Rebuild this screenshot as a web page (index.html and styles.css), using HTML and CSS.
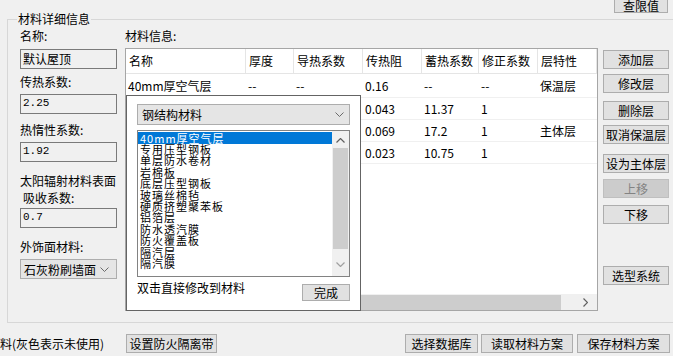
FILE: index.html
```html
<!DOCTYPE html>
<html lang="zh-CN">
<head>
<meta charset="utf-8">
<title>材料详细信息</title>
<link rel="stylesheet" href="styles.css">
</head>
<body>
<div class="top"><button class="btn btn-top">查限值</button></div>
<div class="group">
  <span class="group-title">材料详细信息</span>
  <div class="left">
    <div class="lbl">名称:</div>
    <div class="tb tb-cjk mt5">默认屋顶</div>
    <div class="lbl mt5">传热系数:</div>
    <div class="tb mt4">2.25</div>
    <div class="lbl mt8">热惰性系数:</div>
    <div class="tb mt4">1.92</div>
    <div class="lbl lbl-2 mt10">太阳辐射材料表面<br><span class="indent">吸收系数:</span></div>
    <div class="tb mt2">0.7</div>
    <div class="lbl mt11">外饰面材料:</div>
    <div class="combo combo-left mt4"><span>石灰粉刷墙面</span><svg class="chev" width="9" height="5" viewBox="0 0 9 5"><polyline points="0.5,0.5 4.5,4.5 8.5,0.5" fill="none" stroke="#6a6a6a" stroke-width="1"/></svg></div>
  </div>
  <div class="mid">
    <div class="lbl">材料信息:</div>
    <div class="lv mt4">
      <div class="lv-head">
        <div class="c c1">名称</div><div class="c c2">厚度</div><div class="c c3">导热系数</div><div class="c c4">传热阻</div><div class="c c5">蓄热系数</div><div class="c c6">修正系数</div><div class="c c7">层特性</div>
      </div>
      <div class="lv-row first">
        <div class="c c1">40mm厚空气层</div><div class="c c2">--</div><div class="c c3">--</div><div class="c c4">0.16</div><div class="c c5">--</div><div class="c c6">--</div><div class="c c7">保温层</div>
      </div>
      <div class="lv-row">
        <div class="c c1"></div><div class="c c2"></div><div class="c c3"></div><div class="c c4">0.043</div><div class="c c5">11.37</div><div class="c c6">1</div><div class="c c7"></div>
      </div>
      <div class="lv-row">
        <div class="c c1"></div><div class="c c2"></div><div class="c c3"></div><div class="c c4">0.069</div><div class="c c5">17.2</div><div class="c c6">1</div><div class="c c7">主体层</div>
      </div>
      <div class="lv-row">
        <div class="c c1"></div><div class="c c2"></div><div class="c c3"></div><div class="c c4">0.023</div><div class="c c5">10.75</div><div class="c c6">1</div><div class="c c7"></div>
      </div>
      <div class="hscroll">
        <div class="hthumb"></div>
        <svg class="harrow" width="5" height="9" viewBox="0 0 5 9"><polyline points="0.5,0.5 4.5,4.5 0.5,8.5" fill="none" stroke="#606060" stroke-width="1.2"/></svg>
      </div>
      <div class="popup">
        <div class="combo combo-pop"><span>钢结构材料</span><svg class="chev" width="9" height="5" viewBox="0 0 9 5"><polyline points="0.5,0.5 4.5,4.5 8.5,0.5" fill="none" stroke="#6a6a6a" stroke-width="1"/></svg></div>
        <div class="listbox">
          <div class="items">
            <div class="item sel">40mm厚空气层</div>
            <div class="item">专用压型钢板</div>
            <div class="item">单层防水卷材</div>
            <div class="item">岩棉板</div>
            <div class="item">底层压型钢板</div>
            <div class="item">玻璃丝棉毡</div>
            <div class="item">硬质挤塑聚苯板</div>
            <div class="item">铝箔层</div>
            <div class="item">防水透汽膜</div>
            <div class="item">防火覆盖板</div>
            <div class="item">隔汽层</div>
            <div class="item">隔汽膜</div>
          </div>
          <div class="vscroll">
            <svg class="varrow" width="9" height="5" viewBox="0 0 9 5"><polyline points="0.5,4.5 4.5,0.5 8.5,4.5" fill="none" stroke="#606060" stroke-width="1.2"/></svg>
            <div class="vthumb"></div>
            <svg class="varrow down" width="9" height="5" viewBox="0 0 9 5"><polyline points="0.5,0.5 4.5,4.5 8.5,0.5" fill="none" stroke="#a0a0a0" stroke-width="1.2"/></svg>
          </div>
        </div>
        <div class="pop-foot">
          <span class="hint">双击直接修改到材料</span>
          <button class="btn btn-done">完成</button>
        </div>
      </div>
    </div>
  </div>
  <div class="right">
    <button class="btn rb">添加层</button>
    <button class="btn rb mt5">修改层</button>
    <button class="btn rb mt8">删除层</button>
    <button class="btn rb mt5">取消保温层</button>
    <button class="btn rb mt10">设为主体层</button>
    <button class="btn rb disabled mt6">上移</button>
    <button class="btn rb mt7">下移</button>
    <button class="btn rb mt42">选型系统</button>
  </div>
</div>
<div class="bottom">
  <span class="note">料(灰色表示未使用)</span>
  <button class="btn b-fire">设置防火隔离带</button>
  <span class="spacer"></span>
  <button class="btn b-db">选择数据库</button>
  <button class="btn b-read">读取材料方案</button>
  <button class="btn b-save">保存材料方案</button>
</div>
</body>
</html>
```
FILE: styles.css
```css
html, body {
  margin: 0;
  padding: 0;
}
body {
  width: 673px;
  height: 356px;
  overflow: hidden;
  background: #f0f0f0;
  font-family: "Noto Sans CJK SC", "Microsoft YaHei", sans-serif;
  font-size: 12px;
  color: #000;
}
.btn {
  box-sizing: border-box;
  margin: 0;
  padding: 0;
  font-family: "Noto Sans CJK SC", sans-serif;
  font-size: 12px;
  line-height: 15px;
  color: #000;
  background: #e1e1e1;
  border: 1px solid #adadad;
  border-radius: 0;
  text-align: center;
}
.top {
  height: 19px;
  display: flex;
  justify-content: flex-end;
}
.btn-top {
  width: 54px;
  height: 16px;
  margin-top: -3px;
  margin-right: 5px;
}
.group {
  position: relative;
  box-sizing: border-box;
  width: 720px;
  height: 304px;
  margin-left: 7px;
  border: 1px solid #d7d7d7;
  padding-left: 12px;
  display: flex;
  align-items: flex-start;
}
.group-title {
  position: absolute;
  left: 9px;
  top: -9px;
  padding: 0 1px;
  line-height: 16px;
  background: #f0f0f0;
}
.mt2 { margin-top: 2px; }
.mt4 { margin-top: 4px; }
.mt5 { margin-top: 5px; }
.mt6 { margin-top: 6px; }
.mt7 { margin-top: 7px; }
.mt8 { margin-top: 8px; }
.mt10 { margin-top: 10px; }
.mt11 { margin-top: 11px; }
.mt42 { margin-top: 42px; }

.left {
  width: 97px;
  padding-top: 8px;
  display: flex;
  flex-direction: column;
}
.lbl {
  line-height: 16px;
  white-space: nowrap;
}
.lbl-2 {
  line-height: 17px;
}
.indent {
  padding-left: 3px;
}
.tb {
  box-sizing: border-box;
  height: 20px;
  border: 1px solid #7a7a7a;
  background: #f0f0f0;
  padding-left: 2px;
  font-family: "Liberation Mono", monospace;
  font-size: 11px;
  line-height: 17px;
}
.tb-cjk {
  font-family: "Noto Sans CJK SC", sans-serif;
  font-size: 12px;
}
.combo {
  box-sizing: border-box;
  display: flex;
  align-items: center;
  justify-content: space-between;
  border: 1px solid #adadad;
  background: #e5e5e5;
}
.combo-left {
  height: 20px;
  padding: 0 7px 0 3px;
}
.chev {
  display: block;
}

.mid {
  width: 473px;
  margin-left: 8px;
  padding-top: 8px;
  display: flex;
  flex-direction: column;
}
.lv {
  position: relative;
  box-sizing: border-box;
  height: 263px;
  border: 1px solid #a6a6a6;
  background: #fff;
}
.lv-head, .lv-row {
  display: flex;
}
.lv-head {
  height: 24px;
  border-bottom: 1px solid #e5e5e5;
}
.lv-head .c {
  box-sizing: border-box;
  border-right: 1px solid #e5e5e5;
  line-height: 24px;
  padding-left: 3px;
}
.lv-row {
  box-sizing: border-box;
  height: 22px;
  border-bottom: 1px solid #f0f0f0;
}
.lv-row.first {
  height: 24px;
}
.lv-row .c {
  box-sizing: border-box;
  line-height: 21px;
  padding-left: 2px;
  white-space: nowrap;
}
.lv-row.first .c {
  line-height: 23px;
}
.c1 { width: 120px; }
.c2 { width: 48px; }
.c3 { width: 69px; }
.c4 { width: 59px; }
.c5 { width: 57px; }
.c6 { width: 59px; }
.c7 { width: 59px; }

.hscroll {
  position: absolute;
  left: 0;
  right: 0;
  bottom: 0;
  height: 16px;
  background: #f0f0f0;
  display: flex;
  align-items: center;
}
.hthumb {
  margin-left: 17px;
  width: 418px;
  height: 15px;
  background: #cdcdcd;
}
.harrow {
  margin-left: 22px;
}

.popup {
  position: absolute;
  left: 0;
  top: 46px;
  box-sizing: border-box;
  width: 235px;
  height: 216px;
  border: 1px solid #646464;
  background: #fff;
  padding: 8px 10px 0 10px;
  display: flex;
  flex-direction: column;
}
.combo-pop {
  height: 21px;
  padding: 0 5px 0 4px;
  font-size: 12px;
}
.listbox {
  box-sizing: border-box;
  margin-top: 5px;
  height: 147px;
  border: 1px solid #828282;
  display: flex;
}
.items {
  width: 194px;
  padding-top: 1px;
  overflow: hidden;
}
.item {
  height: 11.4px;
  line-height: 11.4px;
  padding-left: 2px;
  white-space: nowrap;
  font-size: 11px;
  letter-spacing: 1px;
}
.item.sel {
  height: 12px;
  line-height: 12px;
  background: #0078d7;
  color: #fff;
}
.vscroll {
  width: 17px;
  background: #f0f0f0;
  display: flex;
  flex-direction: column;
  align-items: center;
}
.varrow {
  margin-top: 7px;
}
.vthumb {
  margin-top: 5px;
  width: 15px;
  height: 101px;
  background: #cdcdcd;
}
.varrow.down {
  margin-top: 13px;
}
.pop-foot {
  margin-top: 3px;
  display: flex;
  justify-content: space-between;
  align-items: flex-start;
}
.hint {
  line-height: 16px;
}
.btn-done {
  margin-top: 4px;
  width: 48px;
  height: 17px;
  line-height: 14px;
}

.right {
  margin-left: 5px;
  padding-top: 30px;
  display: flex;
  flex-direction: column;
}
.rb {
  width: 66px;
  height: 19px;
  white-space: nowrap;
}
.rb.disabled {
  background: #cccccc;
  border-color: #bfbfbf;
  color: #838383;
}

.bottom {
  margin-top: 11px;
  height: 19px;
  display: flex;
  align-items: center;
  padding-right: 3px;
}
.note {
  width: 126px;
  line-height: 19px;
  white-space: nowrap;
}
.b-fire {
  width: 91px;
  height: 19px;
}
.spacer {
  flex: 1;
}
.b-db {
  width: 73px;
  height: 19px;
}
.b-read {
  width: 92px;
  height: 19px;
  margin-left: 3px;
}
.b-save {
  width: 93px;
  height: 19px;
  margin-left: 4px;
}
```
